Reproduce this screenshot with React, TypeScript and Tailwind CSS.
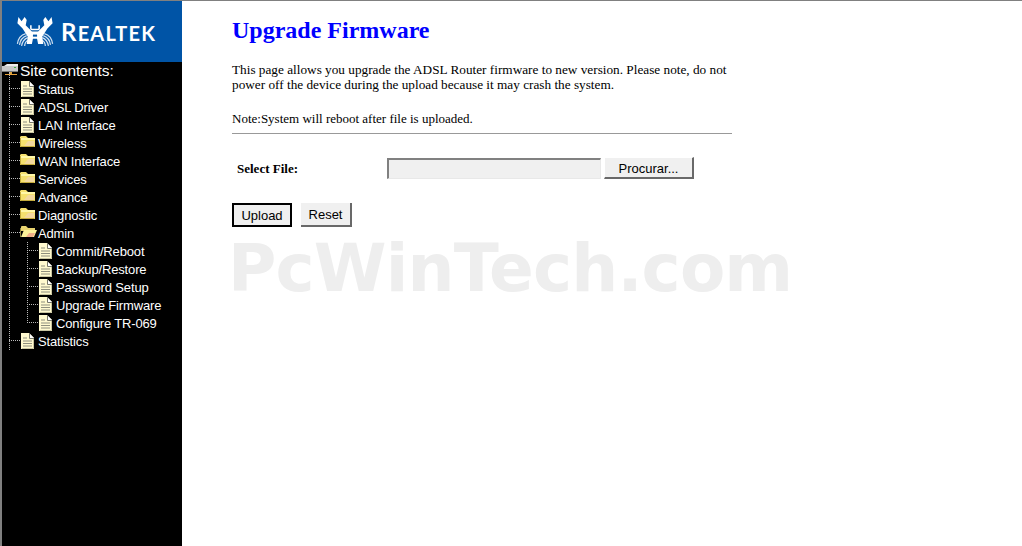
function PageIcon() {
  return (
    <svg width="13" height="16" viewBox="0 0 13 16" className="shrink-0 ml-[1px]">
      <path d="M0 0H8L13 5V16H0Z" fill="#fff9cf" />
      <path d="M8 0V5H13Z" fill="#ffffff" />
      <path d="M8.5 0V5.5H13" fill="none" stroke="#77776a" />
      <path d="M2 5H6M2 8H11M2 10.5H11M2 13H11" stroke="#8f8f7e" />
      <path d="M12.5 6V15.5H1" fill="none" stroke="#c9c5a0" />
    </svg>
  );
}

function FolderIcon({ open }: { open?: boolean }) {
  if (open) {
    return (
      <svg width="17" height="13" viewBox="0 0 17 13" className="shrink-0">
        <path d="M1 2Q1 1 2 1H6L8 3H15V6H1Z" fill="#e8d36f" />
        <path d="M1 12L4 5H17L14 12Z" fill="#fdf29a" />
        <path d="M9 8H15L13 12H6Z" fill="#f2b08a" />
        <path d="M0.5 3V12" stroke="#8f8440" />
      </svg>
    );
  }
  return (
    <svg width="15" height="12" viewBox="0 0 15 12" className="shrink-0">
      <path d="M1 1H6L8 3H15V12H0V2Z" fill="#f5e06e" />
      <path d="M1 3H15V5H1Z" fill="#fff7a8" />
      <path d="M8 6H14V11H4Z" fill="#f3d8a0" />
      <path d="M0.5 3V11.5H14.5" fill="none" stroke="#c4ab3c" />
    </svg>
  );
}

function ServerIcon() {
  return (
    <svg width="16" height="16" viewBox="0 0 16 16" className="shrink-0">
      <path d="M2 3L5 1H16V3Z" fill="#eeeeee" />
      <rect x="0" y="3" width="16" height="5" fill="#c8c8c8" />
      <rect x="12" y="4" width="2" height="1" fill="#3fae3f" />
      <rect x="0" y="8" width="16" height="1" fill="#777777" />
      <rect x="8" y="9" width="2" height="3" fill="#d9a13a" />
      <rect x="3" y="11" width="12" height="1" fill="#e8a33d" />
    </svg>
  );
}

function Crab() {
  return (
    <svg width="38" height="30" viewBox="0 0 36 29" className="shrink-0">
      <g fill="none" stroke="#cfe0f0" strokeWidth="1.2">
        <path d="M1 26Q2 18 9 16M3 27Q4 20 10 18M5 28Q6 22 11 20M8 28Q8 24 12 22" />
        <path d="M35 26Q34 18 27 16M33 27Q32 20 26 18M31 28Q30 22 25 20M28 28Q28 24 24 22" />
      </g>
      <path
        d="M2 0L5 4L8 0L10 3L9 8L15 14H21L27 8L26 3L28 0L31 4L34 0L35 6L30 11L25 19L26 26H21L20 21H16L15 26H10L11 19L6 11L1 6Z"
        fill="#ffffff"
      />
      <path d="M14 8V11Q14 12 15 12H21Q22 12 22 11V8" fill="none" stroke="#ffffff" strokeWidth="1.5" />
      <path d="M16 17H20V19H16Z" fill="#0054a6" />
    </svg>
  );
}

function TreeRow({ label, icon, depth = 0 }: { label: string; icon: React.ReactNode; depth?: number }) {
  return (
    <div className={`flex h-[18px] items-start ${depth === 1 ? 'pl-[18px]' : ''}`}>
      <div className="mt-[8px] w-[11px] h-0 border-t border-dotted border-[#bbbbbb] shrink-0" />
      <div className="w-[18px] pt-[1px] shrink-0">{icon}</div>
      <span className="mt-[1px] text-[13px] tracking-[-0.15px] leading-[18px] whitespace-nowrap text-white">{label}</span>
    </div>
  );
}

export default function App() {
  return (
    <div className="relative flex h-[546px] w-[1022px] overflow-hidden bg-white font-['Liberation_Sans',sans-serif] border-t border-[#808080]">
      <aside className="w-[182px] shrink-0 bg-black border-l-2 border-[#808080] flex flex-col">
        <div className="h-[61px] bg-[#0054a6] flex items-center pl-[14px] gap-[7px] shrink-0">
          <Crab />
          <span className="font-['Lato',sans-serif] font-bold text-white text-[24px] leading-none tracking-[1.2px] whitespace-nowrap">
            R<span className="text-[20px]">EALTEK</span>
          </span>
        </div>
        <div className="flex h-[18px] items-center">
          <ServerIcon />
          <span className="ml-[2px] text-[15.5px] leading-[18px] text-white whitespace-nowrap">Site contents:</span>
        </div>
        <div className="relative ml-[7px]">
          <div className="absolute left-0 top-[-8px] h-[278px] border-l border-dotted border-[#bbbbbb]" />
          <TreeRow label="Status" icon={<PageIcon />} />
          <TreeRow label="ADSL Driver" icon={<PageIcon />} />
          <TreeRow label="LAN Interface" icon={<PageIcon />} />
          <TreeRow label="Wireless" icon={<FolderIcon />} />
          <TreeRow label="WAN Interface" icon={<FolderIcon />} />
          <TreeRow label="Services" icon={<FolderIcon />} />
          <TreeRow label="Advance" icon={<FolderIcon />} />
          <TreeRow label="Diagnostic" icon={<FolderIcon />} />
          <TreeRow label="Admin" icon={<FolderIcon open />} />
          <div className="relative">
            <div className="absolute left-[18px] top-0 h-[81px] border-l border-dotted border-[#bbbbbb]" />
            <TreeRow depth={1} label="Commit/Reboot" icon={<PageIcon />} />
            <TreeRow depth={1} label="Backup/Restore" icon={<PageIcon />} />
            <TreeRow depth={1} label="Password Setup" icon={<PageIcon />} />
            <TreeRow depth={1} label="Upgrade Firmware" icon={<PageIcon />} />
            <TreeRow depth={1} label="Configure TR-069" icon={<PageIcon />} />
          </div>
          <TreeRow label="Statistics" icon={<PageIcon />} />
        </div>
      </aside>

      <main className="flex-1 pl-[50px] pt-[15px] font-['Liberation_Serif',serif] text-black">
        <h1 className="text-[24px] leading-[28px] font-bold text-[#0000ff]">Upgrade Firmware</h1>
        <p className="mt-[18px] w-[500px] text-[13.25px] leading-[15px]">
          This page allows you upgrade the ADSL Router firmware to new version. Please note, do not power off the device during the upload because it may crash the system.
        </p>
        <p className="mt-[20px] text-[13px] leading-[14px]">Note:System will reboot after file is uploaded.</p>
        <hr className="mt-[7px] w-[500px] border-t border-[#999999]" />
        <div className="mt-[23px] flex items-center">
          <span className="ml-[5px] w-[150px] pt-[2px] text-[13px] font-bold">Select File:</span>
          <div className="h-[21px] w-[214px] bg-[#f0f0f0] border-t-2 border-l-2 border-r border-b border-t-[#808080] border-l-[#808080] border-r-[#e8e8e8] border-b-[#e8e8e8]" />
          <button className="ml-[3px] h-[22px] w-[90px] pt-[1px] bg-[#f0f0f0] border border-t-[#ffffff] border-l-[#ffffff] border-r-[#696969] border-b-[#696969] border-r-2 border-b-2 font-['Liberation_Sans',sans-serif] text-[13px] leading-none text-black">
            Procurar...
          </button>
        </div>
        <div className="mt-[24px] flex items-center gap-[9px]">
          <button className="h-[24px] w-[60px] bg-[#f0f0f0] border-2 border-black font-['Liberation_Sans',sans-serif] text-[13px] leading-none text-black">
            Upload
          </button>
          <button className="h-[24px] w-[51px] pt-[1px] bg-[#f0f0f0] border-r-2 border-b-2 border-[#696969] font-['Liberation_Sans',sans-serif] text-[13px] leading-none text-black">
            Reset
          </button>
        </div>
      </main>

      <div className="pointer-events-none absolute left-[228px] top-[233px] font-['DejaVu_Sans',sans-serif] font-bold text-[66px] leading-[70px] tracking-[-0.85px] text-[#eeeeee] whitespace-nowrap">
        PcWinTech.com
      </div>
    </div>
  );
}
